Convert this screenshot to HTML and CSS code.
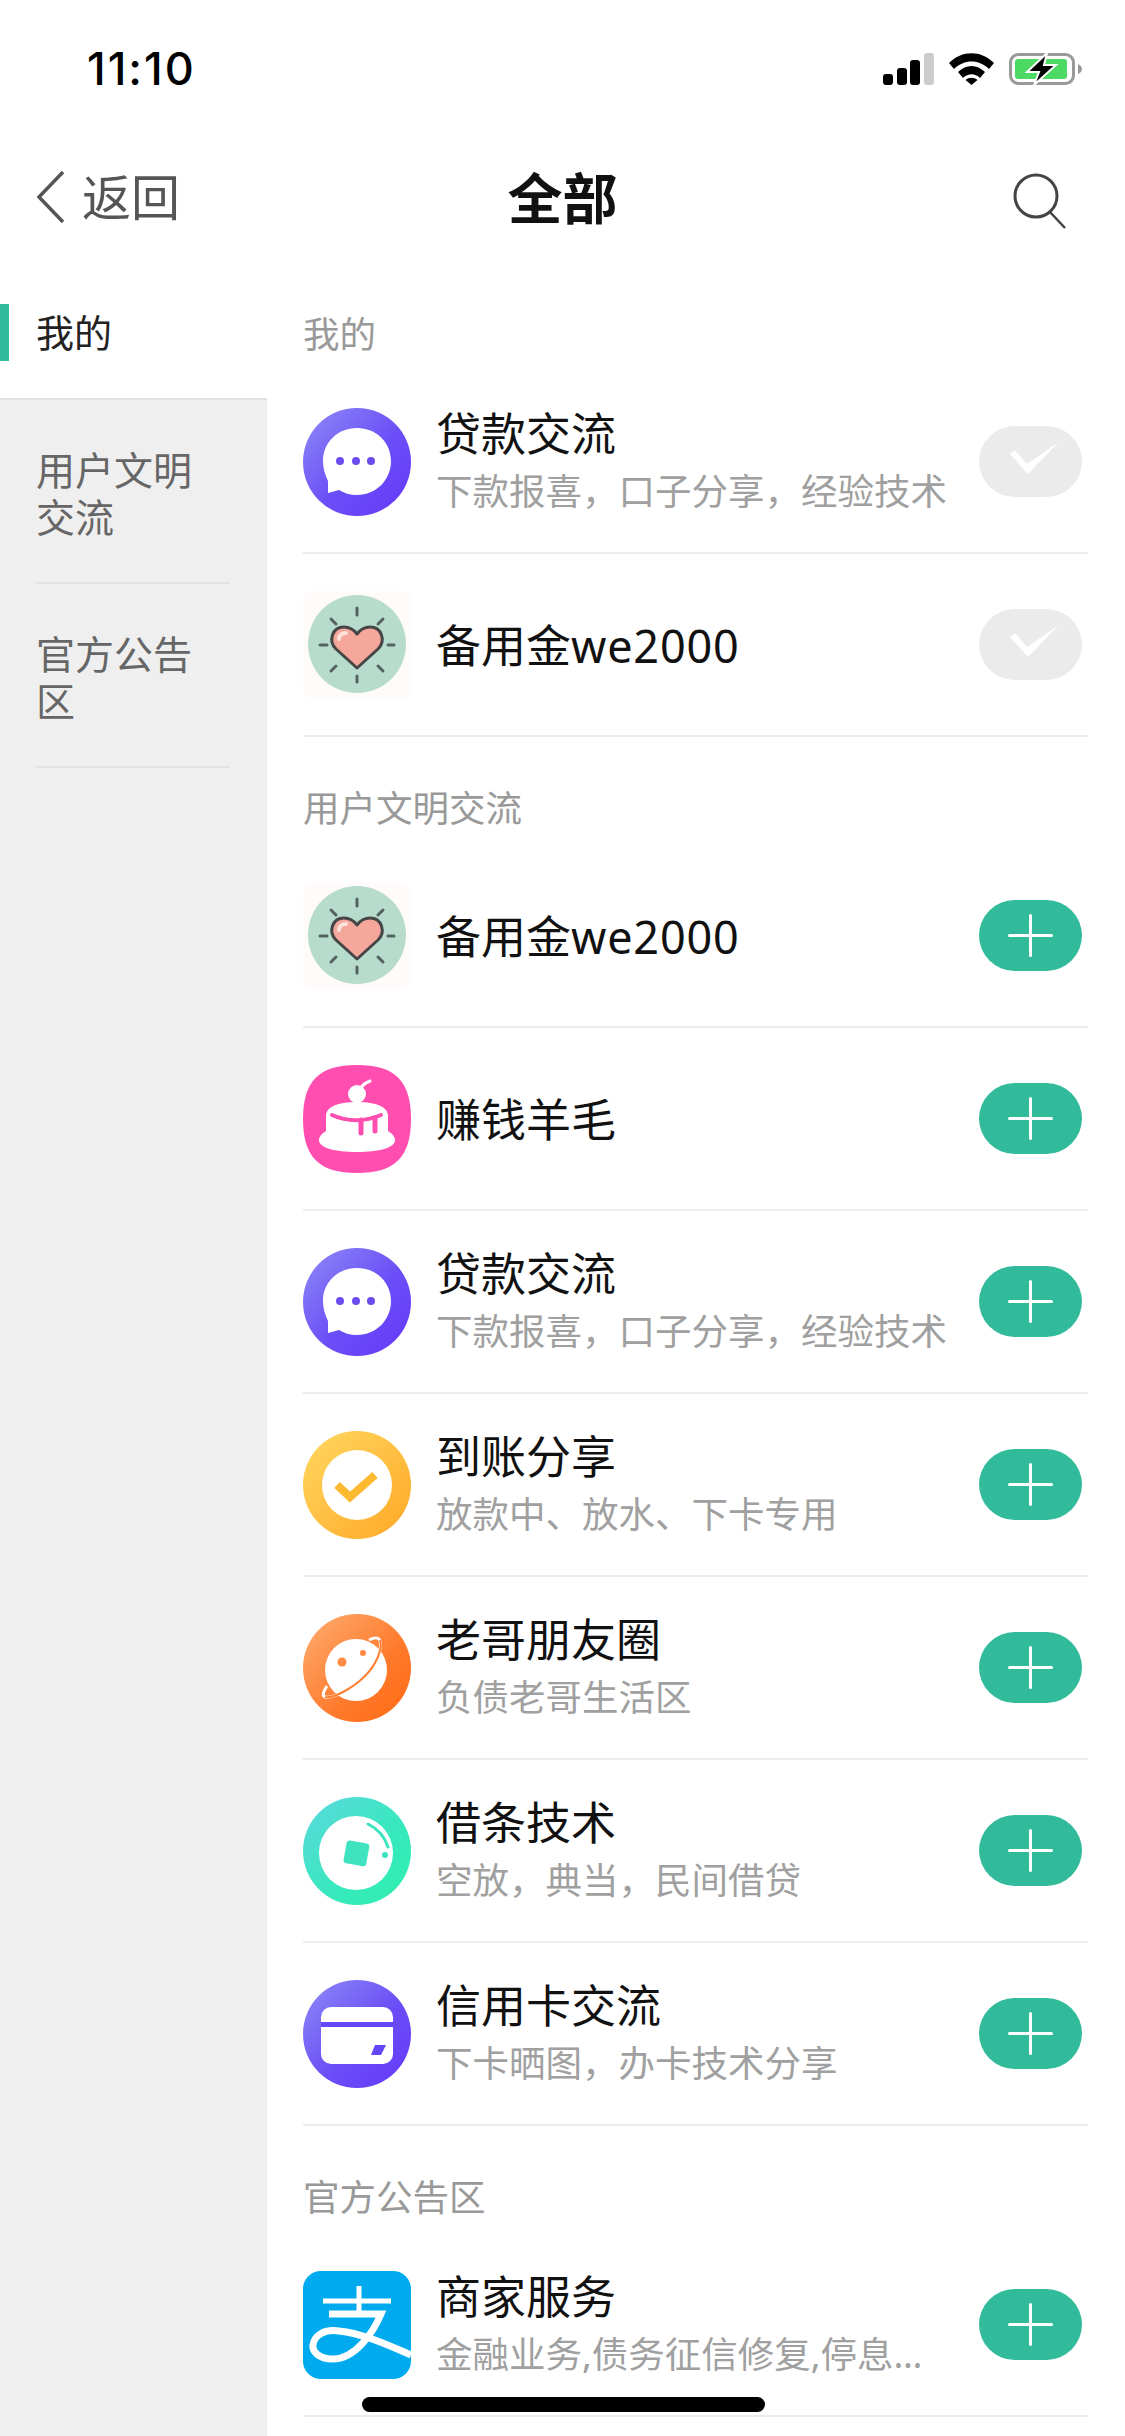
FILE: index.html
```html
<!DOCTYPE html>
<html lang="zh-CN">
<head>
    <meta charset="UTF-8">
    <meta name="viewport" content="width=device-width, initial-scale=1.0">
    <title>全部</title>
    <link rel="stylesheet" href="styles.css">
</head>
<body>
    <!-- shared icons -->
    <svg class="sprite" xmlns="http://www.w3.org/2000/svg">
        <defs>
            <linearGradient id="g-purple" x1="0" y1="0" x2="1" y2="1"><stop offset="0" stop-color="#8f8bf6"/><stop offset=".55" stop-color="#6b4ef7"/><stop offset="1" stop-color="#6338fa"/></linearGradient>
            <linearGradient id="g-yellow" x1="0" y1="0" x2="1" y2="1"><stop offset="0" stop-color="#ffd860"/><stop offset="1" stop-color="#ffa726"/></linearGradient>
            <linearGradient id="g-orange" x1="0" y1="0" x2="1" y2="1"><stop offset="0" stop-color="#fdae72"/><stop offset=".6" stop-color="#ff7a2c"/><stop offset="1" stop-color="#ff6a12"/></linearGradient>
            <linearGradient id="g-green" x1="0" y1="0" x2="1" y2="1"><stop offset="0" stop-color="#5cd8df"/><stop offset=".6" stop-color="#36e9bc"/><stop offset="1" stop-color="#2ff0ad"/></linearGradient>
            <symbol id="i-chat" viewBox="0 0 108 108">
                <circle cx="54" cy="54" r="54" fill="url(#g-purple)"/>
                <path d="M54 20C73 20 88 34 88 53C88 72 73 87 54 87C47 87 41 85 36 82L25 85L25 73C22 67 20 60 20 53C20 34 35 20 54 20Z" fill="#fff"/>
                <circle cx="37" cy="53" r="4" fill="#6a4cf0"/><circle cx="53" cy="53" r="4" fill="#6a4cf0"/><circle cx="68" cy="53" r="4" fill="#6a4cf0"/>
            </symbol>
            <symbol id="i-heart" viewBox="0 0 108 108">
                <rect width="108" height="108" rx="10" fill="#fefbfa"/>
                <circle cx="54" cy="53" r="49" fill="#b7dccd"/>
                <path d="M54 17V24M54 85V91M17 54H24M85 54H91M28 28L33 33M80 28L75 33M28 80L33 75M80 80L75 75" stroke="#55635e" stroke-width="3" stroke-linecap="round" fill="none"/>
                <path d="M54 77L33 58C25 50 29 36 41 36C47 36 51 39 54 43C57 39 61 36 67 36C79 36 83 50 75 58Z" fill="#f6a79c" stroke="#464646" stroke-width="3" stroke-linejoin="round"/>
                <path d="M36 48C36 44 39 42 43 42" stroke="#fde2dc" stroke-width="4" stroke-linecap="round" fill="none"/>
            </symbol>
            <symbol id="i-cake" viewBox="0 0 108 108">
                <path d="M54 0C92 0 108 16 108 54C108 92 92 108 54 108C16 108 0 92 0 54C0 16 16 0 54 0Z" fill="#ff4db0"/>
                <path d="M56 26C58 21 62 18 67 16" stroke="#fff" stroke-width="3" stroke-linecap="round" fill="none"/>
                <circle cx="54" cy="29" r="9" fill="#fff"/>
                <path d="M23 50C24 42 34 37 54 37C74 37 84 42 85 50L85 66C90 69 92 72 92 75C92 83 76 87 54 87C32 87 16 83 16 75C16 72 18 69 23 66Z" fill="#fff"/>
                <path d="M29 50C44 57 62 57 78 50" stroke="#ff4db0" stroke-width="4" stroke-linecap="round" fill="none"/>
                <path d="M58 55V68M72 53V66" stroke="#ff4db0" stroke-width="5" stroke-linecap="round" fill="none"/>
            </symbol>
            <symbol id="i-check" viewBox="0 0 108 108">
                <circle cx="54" cy="54" r="54" fill="url(#g-yellow)"/>
                <circle cx="54" cy="54" r="35" fill="#fff"/>
                <path d="M34 54L47 66L72 44" stroke="#fdb92f" stroke-width="8" fill="none"/>
            </symbol>
            <symbol id="i-planet" viewBox="0 0 108 108">
                <circle cx="54" cy="54" r="54" fill="url(#g-orange)"/>
                <circle cx="53" cy="56" r="31" fill="#fff"/>
                <path d="M24 72C20 78 19 82 22 83C30 85 50 74 62 62C73 51 81 32 76 25C74 23 70 24 66 26" stroke="#fff" stroke-width="3" fill="none"/>
                <path d="M22 83C30 85 50 74 62 62C73 51 80 35 77 26" stroke="#ff7f32" stroke-width="2" fill="none"/>
                <circle cx="39" cy="48" r="4.500" fill="#ff8a42"/><circle cx="60" cy="39" r="3" fill="#ff8a42"/>
            </symbol>
            <symbol id="i-coin" viewBox="0 0 108 108">
                <circle cx="54" cy="54" r="54" fill="url(#g-green)"/>
                <circle cx="53" cy="56" r="37" fill="#fff"/>
                <rect x="42" y="45" width="23" height="23" rx="3" fill="#3fe3c0" transform="rotate(10 54 56)"/>
                <path d="M65 27C75 32 82 40 85 50" stroke="#3fe3c0" stroke-width="3" stroke-linecap="round" fill="none"/>
                <circle cx="82" cy="58" r="3" fill="#3fe3c0"/>
            </symbol>
            <symbol id="i-card" viewBox="0 0 108 108">
                <circle cx="54" cy="54" r="54" fill="url(#g-purple)"/>
                <rect x="18" y="27" width="72" height="57" rx="10" fill="#fff"/>
                <rect x="18" y="42" width="72" height="5" fill="#6546f8"/>
                <path d="M72 65H83L78 75H68Z" fill="#6546f8"/>
            </symbol>
            <symbol id="i-alipay" viewBox="0 0 108 108">
                <rect width="108" height="108" rx="18" fill="#00aaee"/>
                <path d="M20 30H88M56 15V42" stroke="#fff" stroke-width="5" fill="none"/>
                <path d="M26 43H78C70 62 52 88 30 88C15 88 9 80 10 74C11 64 22 58 36 60C58 62 85 74 108 84" stroke="#fff" stroke-width="7" fill="none"/>
            </symbol>
            <symbol id="i-plus" viewBox="0 0 103 71">
                <path d="M30.500 35.500H72.500M51.500 15.500V55.500" stroke="#fff" stroke-width="3" stroke-linecap="round"/>
            </symbol>
            <symbol id="i-tick" viewBox="0 0 103 71">
                <path d="M31 28L36 24L48 38L80 16L49 48Z" fill="#fff"/>
            </symbol>
        </defs>
    </svg>

    <div class="status-bar">
        <span class="time">11:10</span>
        <div class="status-icons">
            <svg class="signal" viewBox="0 0 51 32" width="51" height="32">
                <rect x="0" y="21" width="10" height="11" rx="3"/>
                <rect x="14" y="15" width="10" height="17" rx="3"/>
                <rect x="27" y="7" width="10" height="25" rx="3"/>
                <rect x="41" y="0" width="10" height="32" rx="3" fill="#ccc"/>
            </svg>
            <svg class="wifi" viewBox="0 0 45 32" width="45" height="32">
                <path d="M0 10C13 -3 32 -3 45 10L40 16C30 6 15 6 5 16Z"/>
                <path d="M9 19C17 11 28 11 36 19L31 25C26 20 19 20 14 25Z"/>
                <path d="M16.500 27C20 24 25 24 28.500 27L22.500 32Z"/>
            </svg>
            <svg class="battery" viewBox="0 0 73 32" width="73" height="32">
                <rect x="1.500" y="1.500" width="63" height="29" rx="8" fill="none" stroke="#999" stroke-width="3"/>
                <rect x="6" y="6" width="52" height="20" rx="3" fill="#4cd964"/>
                <path d="M69 11C71.500 12 73 14 73 16C73 18 71.500 20 69 21Z" fill="#999"/>
                <path d="M38 0L18 19H30L25 32L47 12H35Z" fill="#000" stroke="#fff" stroke-width="2"/>
            </svg>
        </div>
    </div>

    <header class="nav">
        <a class="back">
            <svg viewBox="0 0 28 52" width="28" height="52"><path d="M26 1L2 26L26 51" fill="none" stroke="#555" stroke-width="3.500"/></svg>
            <span>返回</span>
        </a>
        <h1>全部</h1>
        <svg class="search" viewBox="0 0 53 56" width="53" height="56">
            <circle cx="23" cy="23" r="21" fill="none" stroke="#444" stroke-width="3"/>
            <path d="M37 39L52 55" stroke="#444" stroke-width="2.500"/>
        </svg>
    </header>

    <div class="page">
        <aside class="sidebar">
            <div class="side-item active"><i class="side-mark"></i><span>我的</span></div>
            <div class="side-item">用户文明交流</div>
            <div class="side-item">官方公告区</div>
        </aside>

        <main class="content">
            <h2>我的</h2>
            <div class="row">
                <svg class="avatar"><use href="#i-chat"/></svg>
                <div class="info"><div class="name">贷款交流</div><div class="desc">下款报喜，口子分享，经验技术</div></div>
                <button class="pill joined"><svg><use href="#i-tick"/></svg></button>
            </div>
            <div class="row">
                <svg class="avatar"><use href="#i-heart"/></svg>
                <div class="info"><div class="name">备用金<span class="latin">we2000</span></div></div>
                <button class="pill joined"><svg><use href="#i-tick"/></svg></button>
            </div>

            <h2>用户文明交流</h2>
            <div class="row">
                <svg class="avatar"><use href="#i-heart"/></svg>
                <div class="info"><div class="name">备用金<span class="latin">we2000</span></div></div>
                <button class="pill"><svg><use href="#i-plus"/></svg></button>
            </div>
            <div class="row">
                <svg class="avatar"><use href="#i-cake"/></svg>
                <div class="info"><div class="name">赚钱羊毛</div></div>
                <button class="pill"><svg><use href="#i-plus"/></svg></button>
            </div>
            <div class="row">
                <svg class="avatar"><use href="#i-chat"/></svg>
                <div class="info"><div class="name">贷款交流</div><div class="desc">下款报喜，口子分享，经验技术</div></div>
                <button class="pill"><svg><use href="#i-plus"/></svg></button>
            </div>
            <div class="row">
                <svg class="avatar"><use href="#i-check"/></svg>
                <div class="info"><div class="name">到账分享</div><div class="desc">放款中、放水、下卡专用</div></div>
                <button class="pill"><svg><use href="#i-plus"/></svg></button>
            </div>
            <div class="row">
                <svg class="avatar"><use href="#i-planet"/></svg>
                <div class="info"><div class="name">老哥朋友圈</div><div class="desc">负债老哥生活区</div></div>
                <button class="pill"><svg><use href="#i-plus"/></svg></button>
            </div>
            <div class="row">
                <svg class="avatar"><use href="#i-coin"/></svg>
                <div class="info"><div class="name">借条技术</div><div class="desc">空放，典当，民间借贷</div></div>
                <button class="pill"><svg><use href="#i-plus"/></svg></button>
            </div>
            <div class="row">
                <svg class="avatar"><use href="#i-card"/></svg>
                <div class="info"><div class="name">信用卡交流</div><div class="desc">下卡晒图，办卡技术分享</div></div>
                <button class="pill"><svg><use href="#i-plus"/></svg></button>
            </div>

            <h2>官方公告区</h2>
            <div class="row">
                <svg class="avatar"><use href="#i-alipay"/></svg>
                <div class="info"><div class="name">商家服务</div><div class="desc">金融业务,债务征信修复,停息…</div></div>
                <button class="pill"><svg><use href="#i-plus"/></svg></button>
            </div>
        </main>
    </div>

    <div class="home-bar"></div>
</body>
</html>
```

FILE: styles.css
```css
* {
    box-sizing: border-box;
}

body {
    position: relative;
    width: 1125px;
    height: 2436px;
    margin: 0;
    overflow: hidden;
    background: #fff;
    color: #111;
    font-family: "Noto Sans", "Noto Sans CJK SC", sans-serif;
}

.sprite {
    position: absolute;
    width: 0;
    height: 0;
}

/* status bar */
.status-bar {
    display: flex;
    justify-content: space-between;
    align-items: flex-start;
    height: 88px;
    padding: 53px 43px 0 87px;
}

.time {
    font-family: Inter, "Liberation Sans", sans-serif;
    font-size: 45px;
    font-weight: 500;
    line-height: 32px;
    letter-spacing: 2px;
    color: #000;
}

.status-icons {
    display: flex;
    gap: 15px;
}

/* nav */
.nav {
    display: grid;
    grid-template-columns: 1fr auto 1fr;
    align-items: center;
    height: 175px;
    padding: 43px 37px 0 37px;
}

.back {
    display: flex;
    align-items: center;
    gap: 17px;
    font-size: 49px;
    color: #555;
}

.back span,
.nav h1 {
    margin-top: -5px;
}

.nav h1 {
    margin-bottom: 0;
    font-size: 55px;
    font-weight: 700;
    color: #111;
}

.search {
    justify-self: end;
    margin-top: 8px;
    margin-right: 22px;
}

/* sidebar + list */
.page {
    display: flex;
    height: 2173px;
}

.sidebar {
    flex: none;
    width: 267px;
    background: #efefef;
    font-size: 39px;
    line-height: 47px;
    color: #666;
}

.side-item {
    display: flex;
    align-items: center;
    height: 184px;
    margin: 0 37px 0 36px;
    padding-top: 3px;
    border-bottom: 2px solid #e2e2e2;
}

.side-item.active {
    height: 137px;
    margin: 0;
    padding-top: 4px;
    background: #fff;
    color: #222;
    font-size: 38px;
}

.side-mark {
    width: 9px;
    height: 57px;
    margin-right: 27px;
    background: #31bb9b;
}

.content {
    flex: none;
    width: 821px;
    padding-left: 36px;
}

.content h2 {
    height: 108px;
    margin: 0;
    padding-top: 45px;
    font-size: 36.500px;
    font-weight: 400;
    line-height: 52px;
    color: #999;
}

.row {
    display: flex;
    align-items: center;
    gap: 25px;
    height: 183px;
    padding-right: 6px;
    border-bottom: 2px solid #ececec;
}

.avatar {
    flex: none;
    width: 108px;
    height: 108px;
}

.info {
    flex: 1;
    min-width: 0;
}

.name {
    font-size: 45px;
    line-height: 58px;
    color: #111;
}

.name:only-child {
    margin-top: 3px;
}

.latin {
    letter-spacing: 0.800px;
}

.desc {
    margin: 2px 0;
    font-size: 36.500px;
    line-height: 52px;
    color: #a0a0a0;
    white-space: nowrap;
}

.pill {
    flex: none;
    width: 103px;
    height: 71px;
    padding: 0;
    border: none;
    border-radius: 36px;
    background: #31bb9b;
}

.pill svg {
    display: block;
    width: 103px;
    height: 71px;
}

.pill.joined {
    background: #ebebeb;
}

.home-bar {
    position: absolute;
    left: 362px;
    top: 2397px;
    width: 403px;
    height: 15px;
    border-radius: 8px;
    background: #000;
}
```
